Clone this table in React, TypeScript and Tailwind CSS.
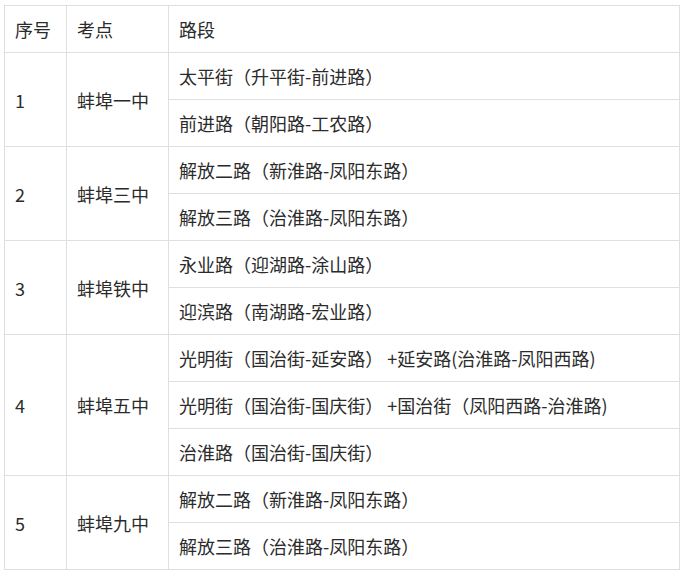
type Group = {
  no: string;
  school: string;
  roads: string[];
};

const groups: Group[] = [
  { no: '1', school: '蚌埠一中', roads: ['太平街（升平街-前进路）', '前进路（朝阳路-工农路）'] },
  { no: '2', school: '蚌埠三中', roads: ['解放二路（新淮路-凤阳东路）', '解放三路（治淮路-凤阳东路）'] },
  { no: '3', school: '蚌埠铁中', roads: ['永业路（迎湖路-涂山路）', '迎滨路（南湖路-宏业路）'] },
  {
    no: '4',
    school: '蚌埠五中',
    roads: [
      '光明街（国治街-延安路） +延安路(治淮路-凤阳西路)',
      '光明街（国治街-国庆街） +国治街（凤阳西路-治淮路)',
      '治淮路（国治街-国庆街）',
    ],
  },
  { no: '5', school: '蚌埠九中', roads: ['解放二路（新淮路-凤阳东路）', '解放三路（治淮路-凤阳东路）'] },
];

const cell = 'h-[47px] border border-[#dfdfdf] px-[10px] py-0 align-middle';

export default function App() {
  return (
    <div
      className="min-h-screen bg-white pl-[4px] pt-[5px] text-[18px] leading-[24px] text-[#2b2b2b] [text-spacing-trim:space-all]"
      style={{ fontFamily: '"Noto Sans CJK SC", "Noto Sans", sans-serif' }}
    >
      <table className="w-[676px] table-fixed border-collapse text-left">
        <colgroup>
          <col className="w-[62px]" />
          <col className="w-[102px]" />
          <col />
        </colgroup>
        <thead>
          <tr>
            <th className={`${cell} font-normal`}>序号</th>
            <th className={`${cell} font-normal`}>考点</th>
            <th className={`${cell} font-normal`}>路段</th>
          </tr>
        </thead>
        <tbody>
          {groups.map((g) =>
            g.roads.map((road, i) => (
              <tr key={g.no + i}>
                {i === 0 && (
                  <>
                    <td rowSpan={g.roads.length} className={cell}>
                      {g.no}
                    </td>
                    <td rowSpan={g.roads.length} className={cell}>
                      {g.school}
                    </td>
                  </>
                )}
                <td className={`${cell} whitespace-pre`}>{road}</td>
              </tr>
            )),
          )}
        </tbody>
      </table>
    </div>
  );
}
